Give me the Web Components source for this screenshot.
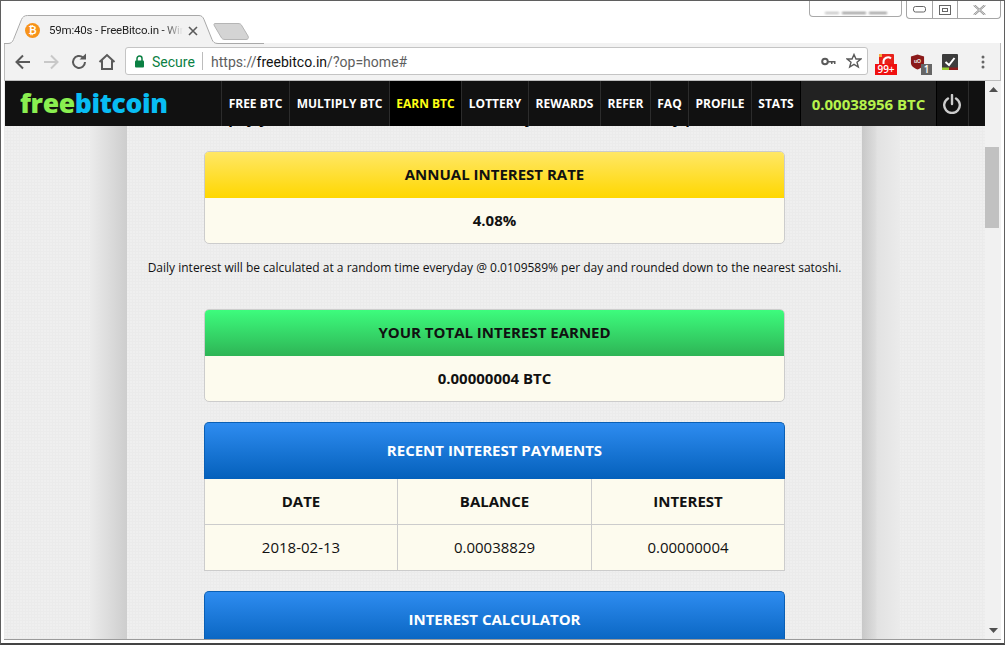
<!DOCTYPE html>
<html><head><meta charset="utf-8">
<style>
html,body{margin:0;padding:0;background:#fff;overflow:hidden}
</style></head><body>
<browser-window>
  <tab-strip slot="tabs"></tab-strip>
  <browser-toolbar slot="toolbar"></browser-toolbar>
  <page-viewport slot="page">
    <site-nav slot="nav"></site-nav>
    <clipped-line>We pay you interest on the bitcoins held in your balance at daily pro rata basis</clipped-line>
    <info-card tone="yellow" head="ANNUAL INTEREST RATE" value="4.08%"></info-card>
    <note-line>Daily interest will be calculated at a random time everyday @ 0.0109589% per day and rounded down to the nearest satoshi.</note-line>
    <info-card tone="green" head="YOUR TOTAL INTEREST EARNED" value="0.00000004 BTC"></info-card>
    <table-card head="RECENT INTEREST PAYMENTS"></table-card>
    <table-card head="INTEREST CALCULATOR" empty></table-card>
  </page-viewport>
</browser-window>
<script>
const UI='Roboto,"Open Sans",sans-serif';
class BrowserWindow extends HTMLElement{constructor(){super();this.attachShadow({mode:'open'}).innerHTML=`
<style>
:host{display:flex;flex-direction:column;box-sizing:border-box;width:1005px;height:645px;border:1px solid #5f5f5f;border-bottom-width:2px;padding:0 3px 3px 3px;background:#fff;position:relative;overflow:hidden;border-bottom-color:#444}
.tabs{height:42px;flex:none}
.tool{height:38px;flex:none}
.page{flex:1;min-height:0;display:flex;border-bottom:1px solid #9a9a9a;margin-right:0}
</style>
<div class="tabs"><slot name="tabs"></slot></div>
<div class="tool"><slot name="toolbar"></slot></div>
<div class="page"><slot name="page"></slot></div>`}}
customElements.define('browser-window',BrowserWindow);

class TabStrip extends HTMLElement{constructor(){super();this.attachShadow({mode:'open'}).innerHTML=`
<style>
:host{display:block;height:42px;position:relative;font:12px ${UI};color:#222}
.shape{position:absolute;left:0;top:0}
.row{display:flex;align-items:center;height:28px;padding:15px 0 0 21px;position:relative;width:180px}
.fav{width:15px;height:15px;border-radius:50%;background:#f7931a;color:#fff;font:bold 10px/15px "Liberation Sans",sans-serif;text-align:center;flex:none}
.title{margin-left:9px;width:134px;white-space:nowrap;overflow:hidden;font:11.500px ${UI};letter-spacing:-.2px;-webkit-mask-image:linear-gradient(90deg,#000 114px,transparent 134px)}
.x{position:absolute;left:184px;top:25px}
.ctl{position:absolute;top:0;display:flex}
.acct{left:805px;width:91px;height:15px;border:1px solid #a9a9a9;border-top:0;border-radius:0 0 4px 4px;box-sizing:content-box;align-items:center;justify-content:center;overflow:hidden;gap:3px}
.blur{height:2px;margin-top:9px;background:#8d8d8d;filter:blur(1px)}
.wc{left:902px;height:17px;border:1px solid #a5a5a5;border-top:0;border-radius:0 0 4px 4px}
.wc i{display:flex;align-items:center;justify-content:center;height:17px;border-right:1px solid #a5a5a5}
.wc i:last-child{border:0}
</style>
<svg class="shape" width="260" height="43" viewBox="0 0 260 43">
  <g transform="translate(-3 0)">
  <path d="M0 43.500V43H8C11 43 12 41 13 39L21 19C22 16.500 24 15 27 15H198C201 15 202.500 16.500 203.500 19L211 39C212 41.500 213 43 217 43H1000" fill="#f2f2f2" stroke="none"/>
  <path d="M0 42.500H7C10 42.500 11.500 41 12.500 38.500L20.500 18.500C21.500 16 23.500 14.500 26.500 14.500H198C200.500 14.500 202 16 203 18.500L211 38.500C212 41 213.500 42.500 217 42.500H266" fill="none" stroke="#a9a9a9"/>
  </g>
  <path d="M211 22.500H234C236 22.500 237 23 238 25L244 35C245 37 244 38.500 242 38.500H221C219 38.500 218 38 217 36L210.500 25C209.500 23.500 210 22.500 211 22.500Z" fill="#d4d4d4" stroke="#b5b5b5"/>
</svg>
<div class="row"><span class="fav">&#8383;</span><span class="title">59m:40s - FreeBitco.in - Win free bitcoins</span></div>
<svg class="x" width="10" height="10" viewBox="0 0 10 10"><path d="M1 1L9 9M9 1L1 9" stroke="#5a5a5a" stroke-width="1.600"/></svg>
<div class="ctl acct"><div class="blur" style="width:14px;background:#bbb"></div><div class="blur" style="width:24px"></div><div class="blur" style="width:18px"></div></div>
<div class="ctl wc">
<i style="width:25px"><svg width="13" height="7"><rect x=".5" y=".5" width="12" height="5.500" rx="2" fill="none" stroke="#666"/></svg></i>
<i style="width:24px"><svg width="12" height="10"><rect x=".5" y=".5" width="11" height="9" fill="none" stroke="#666"/><rect x="3.500" y="3.500" width="5" height="3" fill="none" stroke="#666"/></svg></i>
<i style="width:42px"><svg width="13" height="10"><path d="M1 0L12 10M12 0L1 10" stroke="#888" stroke-width="2" /><path d="M1 0L12 10M12 0L1 10" stroke="#fff" stroke-width=".7"/></svg></i>
</div>`}}
customElements.define('tab-strip',TabStrip);

class BrowserToolbar extends HTMLElement{constructor(){super();this.attachShadow({mode:'open'}).innerHTML=`
<style>
:host{display:flex;align-items:center;box-sizing:border-box;height:38px;background:#f2f2f2;border:solid #bdbdbd;border-width:0 1px 1px 1px;font:14px ${UI}}
.nav{display:flex;width:120px;flex:none;align-items:center;padding-left:8px;box-sizing:border-box;gap:8px}
.nav svg{flex:none}
.omni{width:743px;height:28px;box-sizing:border-box;background:#fff;border:1px solid #c4c4c4;border-radius:3px;display:flex;align-items:center;flex:none;margin-bottom:1px}
.lock{margin-left:8px;flex:none}
.sec{color:#0b8043;margin-left:7px;width:41px;padding-top:2px}
.sep{width:1px;height:18px;background:#bcbcbc;margin:0 8px 0 9px}
.url{color:#5e5e5e;flex:1;white-space:nowrap;padding-top:2px;letter-spacing:.02px}
.url b{font-weight:400;color:#111}
</style>
<div class="nav">
<svg width="20" height="20" viewBox="0 0 20 20"><path d="M17 10H4M10 3.500L3.500 10L10 16.500" fill="none" stroke="#5a5a5a" stroke-width="2"/></svg>
<svg width="20" height="20" viewBox="0 0 20 20"><path d="M3 10H16M10 3.500L16.500 10L10 16.500" fill="none" stroke="#c8c8c8" stroke-width="2"/></svg>
<svg width="20" height="20" viewBox="0 0 20 20"><path d="M16 10A6 6 0 1 1 14 5.500" fill="none" stroke="#5a5a5a" stroke-width="2"/><path d="M10.500 7.500H17V1.500Z" fill="#5a5a5a"/></svg>
<svg width="20" height="20" viewBox="0 0 20 20"><path d="M2.500 10L10 3L17.500 10M5 8.500V17H15V8.500" fill="none" stroke="#5a5a5a" stroke-width="2"/></svg>
</div>
<div class="omni">
<svg class="lock" width="11" height="13" viewBox="0 0 11 13"><path d="M3 6V3.500A2.500 2.500 0 0 1 8 3.500V6" fill="none" stroke="#0b8043" stroke-width="1.500"/><rect x="1" y="5.500" width="9" height="7" rx="1" fill="#0b8043"/></svg>
<span class="sec">Secure</span><span class="sep"></span>
<span class="url">https://<b>freebitco.in</b>/?op=home#</span>
<svg width="15" height="9" viewBox="0 0 15 9" style="margin-right:10px"><circle cx="4" cy="4.500" r="2.800" fill="none" stroke="#5a5a5a" stroke-width="2"/><path d="M7 4H14.500V7H13V5.500H11.500V7H10V5.500H7Z" fill="#5a5a5a"/></svg>
<svg width="16" height="16" viewBox="0 0 16 16" style="margin-right:5px"><path d="M8 1.500L10 6H14.800L11 9.200L12.300 14L8 11.300L3.700 14L5 9.200L1.200 6H6Z" fill="none" stroke="#5a5a5a" stroke-width="1.400"/></svg>
</div>
<ext-icon kind="red"></ext-icon>
<ext-icon kind="ub"></ext-icon>
<ext-icon kind="check"></ext-icon>
<svg width="4" height="14" viewBox="0 0 4 14" style="margin-left:16px"><circle cx="2" cy="2" r="1.500" fill="#666"/><circle cx="2" cy="7" r="1.500" fill="#666"/><circle cx="2" cy="12" r="1.500" fill="#666"/></svg>`}}
customElements.define('browser-toolbar',BrowserToolbar);

class ExtIcon extends HTMLElement{constructor(){super();const k=this.getAttribute('kind');const art={
red:`<svg width="15" height="14" viewBox="0 0 15 14" style="position:absolute;left:4px;top:0"><rect width="15" height="14" rx="1" fill="#e8211a"/><path d="M12 4.500A4.500 4.500 0 0 0 4.500 8V12" fill="none" stroke="#fff" stroke-width="2"/><rect x="0" y="0" width="3" height="3" fill="#f5b041"/></svg><span class="b r">99+</span>`,
ub:`<svg width="15" height="16" viewBox="0 0 16 16" style="position:absolute;left:0;top:0"><path d="M8 0L15 2V9C15 12 12 14.500 8 16C4 14.500 1 12 1 9V2Z" fill="#8b1a1a"/><text x="8" y="9" font-family="Liberation Sans" font-size="5.500" font-weight="700" fill="#eee" text-anchor="middle">uO</text></svg><span class="b g">1</span>`,
check:`<svg width="16" height="16" viewBox="0 0 16 16" style="position:absolute;left:0;top:0"><rect width="16" height="16" rx="1" fill="#3c3c3c"/><path d="M3.500 8L7 11L12.500 4" fill="none" stroke="#fff" stroke-width="2"/><rect y="13.500" width="7" height="2.500" fill="#9acd32"/><rect x="7" y="13.500" width="9" height="2.500" fill="#8b1a1a"/></svg>`}[k];
const w={red:34,ub:32,check:31}[k];
this.attachShadow({mode:'open'}).innerHTML=`<style>
:host{display:block;position:relative;width:${w}px;height:25px;flex:none}
.wrap{position:absolute;left:${k=='red'?7:8}px;top:5px;width:24px;height:24px}
.b{position:absolute;font:600 10px/11px "Open Sans",sans-serif;color:#fff;text-align:center}
.r{left:0;top:10px;width:22px;height:11px;background:#f01010}
.g{left:11px;top:10px;width:11px;height:11px;background:#666}
</style><div class="wrap">${art}</div>`}}
customElements.define('ext-icon',ExtIcon);

class PageViewport extends HTMLElement{constructor(){super();this.attachShadow({mode:'open'}).innerHTML=`
<style>
:host{display:flex;flex:1;min-width:0;position:relative;overflow:hidden;font-family:"Open Sans",sans-serif;color:#000;
--dots:radial-gradient(circle at 1px 1px,rgba(255,255,255,.2) .8px,transparent 1px);
background:#ebebeb}
.nav{position:absolute;left:1px;top:0;right:16px;z-index:3}
.main{margin-left:1px;flex:1;min-width:0;display:grid;grid-template-columns:85px 37px 735px 38px 1fr;overflow:hidden;
 background-image:var(--dots);background-size:3px 3px}
.ls{grid-column:2;background:linear-gradient(90deg,#ebebeb 0,#dedede 45%,#cdcdcd 100%)}
.rs{grid-column:4;background:linear-gradient(90deg,#c8c8c8 0,#dcdcdc 35%,#e2e2e2 40%,#ebebeb 100%)}
.content{grid-column:3;height:0;min-height:100%;display:flex;flex-direction:column;align-items:center;overflow:hidden;background:#ebebeb;background-image:var(--dots);background-size:3px 3px}
scroll-bar{flex:none}
</style>
<div class="nav"><slot name="nav"></slot></div>
<div class="main"><div class="ls"></div><div class="content"><slot></slot></div><div class="rs"></div></div>
<scroll-bar></scroll-bar>`}}
customElements.define('page-viewport',PageViewport);

const NAV=['FREE BTC','MULTIPLY BTC','EARN BTC','LOTTERY','REWARDS','REFER','FAQ','PROFILE','STATS'];
class SiteNav extends HTMLElement{constructor(){super();this.attachShadow({mode:'open'}).innerHTML=`
<style>
:host{display:grid;height:45px;background:#111;grid-template-columns:216px 68px 100px 72px 67px 72px 50px 38px 63px 49px 136px 32px 16px;font-family:"Open Sans",sans-serif;color:#fff}
.logo{font:800 26.500px/45px "Open Sans",sans-serif;padding-left:15px;letter-spacing:-.35px;color:#8aef50;white-space:nowrap}
.logo span{color:#08bdf3}
a{display:flex;align-items:center;justify-content:center;font-weight:700;font-size:12px;border-left:1px solid #2c2c2c;white-space:nowrap}
.on{background:#000;color:#ffff14}
.bal{background:#222;color:#b7f34c;font-size:15px;border-left-color:#000}
.pw{border-left-color:#000;background:#111;padding-right:2px}
.end{border-left:1px solid #2c2c2c}
</style>
<div class="logo">free<span>bitcoin</span></div>
${NAV.map((t,i)=>`<a class="${i==2?'on':''}">${t}</a>`).join('')}
<a class="bal">0.00038956 BTC</a>
<a class="pw"><svg width="20" height="20" viewBox="0 0 20 20"><path d="M6 4.500A7.800 7.800 0 1 0 14 4.500" fill="none" stroke="#ccc" stroke-width="2.400" stroke-linecap="round"/><path d="M10 1V10" stroke="#ccc" stroke-width="2.400" stroke-linecap="round"/></svg></a>
<div class="end"></div>`}}
customElements.define('site-nav',SiteNav);

class ClippedLine extends HTMLElement{constructor(){super();this.attachShadow({mode:'open'}).innerHTML=`
<style>:host{display:block;flex:none;height:70px;width:100%;box-sizing:border-box;padding-top:27px;text-align:center;font:700 15px/20px "Open Sans",sans-serif;white-space:nowrap;overflow:hidden}</style><slot></slot>`}}
customElements.define('clipped-line',ClippedLine);

class NoteLine extends HTMLElement{constructor(){super();this.attachShadow({mode:'open'}).innerHTML=`
<style>:host{display:block;height:65px;text-align:center;font:12px/48px "Open Sans",sans-serif;white-space:nowrap;color:#111;flex:none}</style><slot></slot>`}}
customElements.define('note-line',NoteLine);

const TONES={yellow:'linear-gradient(#ffe766,#ffd700)',green:'linear-gradient(#3dfc7d 0,#2eb455 100%)'};
class InfoCard extends HTMLElement{constructor(){super();const t=this.getAttribute('tone');this.attachShadow({mode:'open'}).innerHTML=`
<style>
:host{display:block;box-sizing:border-box;width:581px;height:93px;flex:none;border:1px solid #ccc;border-radius:5px;overflow:hidden;background:#fdfbee;font:700 15px "Open Sans",sans-serif;text-align:center;color:#111}
.h{height:46px;line-height:45px;background:${TONES[t]}}
.v{height:45px;line-height:45px}
</style><div class="h">${this.getAttribute('head')}</div><div class="v">${this.getAttribute('value')}</div>`;
if(t=='green')this.style.marginBottom='20px'}}
customElements.define('info-card',InfoCard);

class TableCard extends HTMLElement{constructor(){super();const e=this.hasAttribute('empty');this.attachShadow({mode:'open'}).innerHTML=`
<style>
:host{display:block;box-sizing:border-box;width:581px;flex:none;margin-bottom:20px;font:15px "Open Sans",sans-serif;text-align:center;color:#111}
.h{height:57px;box-sizing:border-box;border-radius:5px 5px 0 0;border:1px solid #0a5fb4;border-bottom:0;background:linear-gradient(#2e8cf0,#0460bb);color:#fff;font-weight:700;line-height:55px}
.g{display:grid;grid-template-columns:192px 194px 1fr;background:#fdfbee;border:1px solid #ccc;border-top:0}
.g div{height:45px;line-height:45px;border-left:1px solid #ccc;box-sizing:border-box}
.g div:nth-child(3n+1){border-left:0}
.g .t{font-weight:700;border-bottom:1px solid #ccc;height:46px}
</style><div class="h">${this.getAttribute('head')}</div>
${e?'':`<div class="g"><div class="t">DATE</div><div class="t">BALANCE</div><div class="t">INTEREST</div><div>2018-02-13</div><div>0.00038829</div><div>0.00000004</div></div>`}`}}
customElements.define('table-card',TableCard);

class ScrollBar extends HTMLElement{constructor(){super();this.attachShadow({mode:'open'}).innerHTML=`
<style>
:host{display:flex;flex-direction:column;align-items:stretch;width:16px;background:#f1f1f1;box-sizing:border-box}
.a{height:17px;display:flex;align-items:center;justify-content:center;flex:none}
.gap{height:49px;flex:none}
.th{height:81px;background:#c1c1c1;flex:none;margin:0 2px 0 0}
.sp{flex:1}
</style>
<div class="a"><svg width="9" height="5"><path d="M4.500 0L9 5H0Z" fill="#505050"/></svg></div>
<div class="gap"></div><div class="th"></div><div class="sp"></div>
<div class="a"><svg width="9" height="5"><path d="M0 0H9L4.500 5Z" fill="#505050"/></svg></div>`}}
customElements.define('scroll-bar',ScrollBar);
</script>
</body></html>
